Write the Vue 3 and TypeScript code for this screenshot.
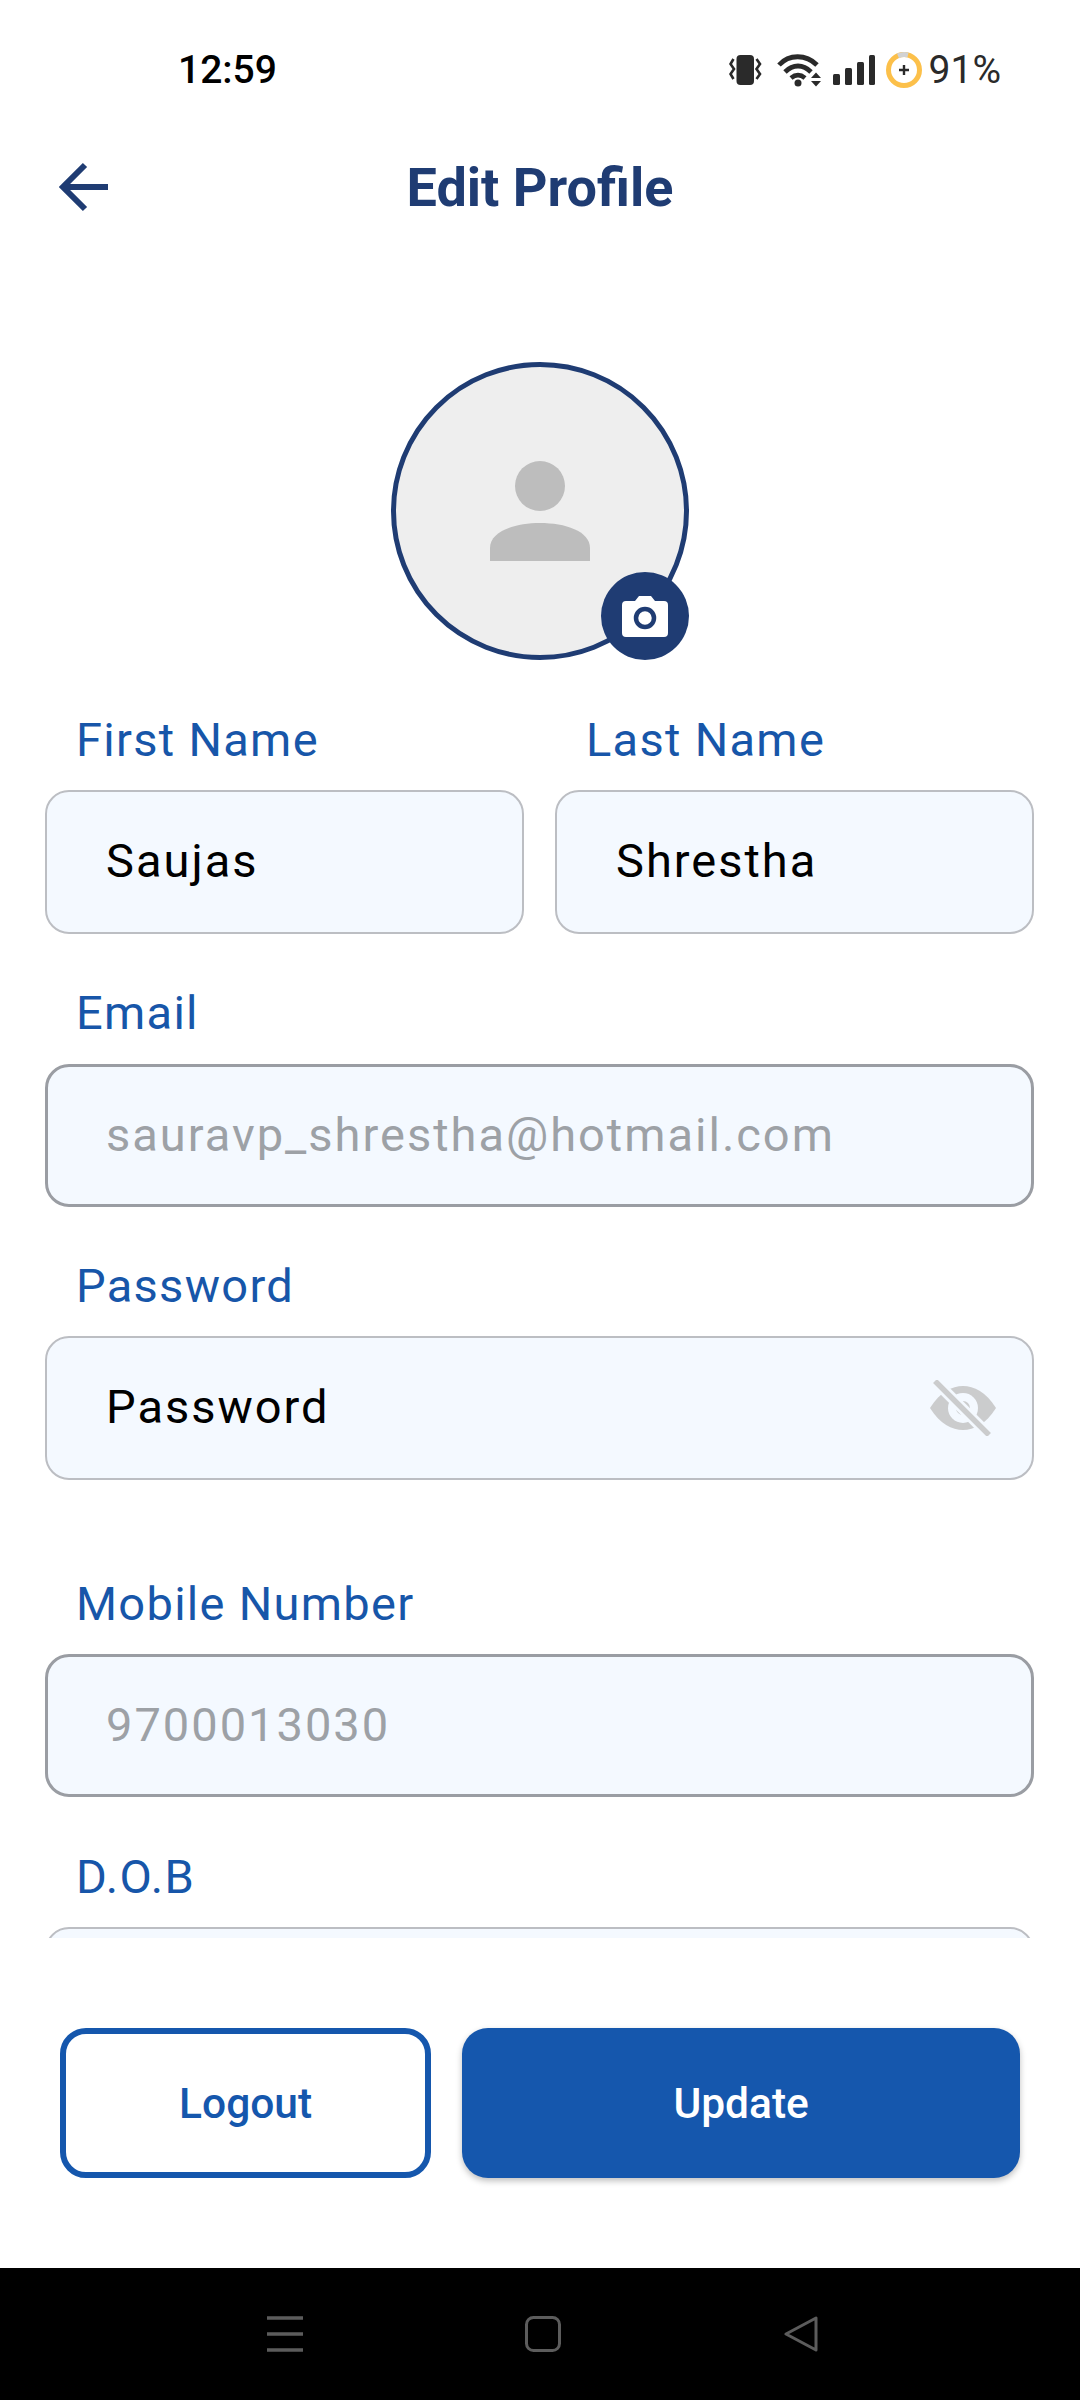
<script setup lang="ts">
interface Field { label: string; value: string; locked?: boolean; eye?: boolean; cls: string }
const fields: Field[] = [
  { label: 'Email', value: 'sauravp_shrestha@hotmail.com', locked: true, cls: 'after-name' },
  { label: 'Password', value: 'Password', eye: true, cls: 'after-email' },
  { label: 'Mobile Number', value: '9700013030', locked: true, cls: 'after-password' },
  { label: 'D.O.B', value: '', cls: 'after-mobile' },
]
</script>

<template>
  <div class="screen">
    <div class="status">
      <span class="time">12:59</span>
      <div class="status-right">
        <svg class="ic-vib" width="34" height="32" viewBox="0 0 34 32">
          <rect x="7.500" y="1" width="17.500" height="30" rx="4" fill="#2a2a2a" />
          <path d="M4.500 5 L1.500 10 L5 15 L1.500 20 L4.500 25 M27.500 5 L31 10 L27.500 15 L31 20 L27.500 25" fill="none" stroke="#2a2a2a" stroke-width="2.600" />
        </svg>
        <svg class="ic-wifi" width="45" height="34" viewBox="0 0 45 34">
          <path d="M3 12 C13 1 30 1 41 12 M9 19 C17 11 27 11 35 19 M15 25 C20 21 24 21 29 25" fill="none" stroke="#2a2a2a" stroke-width="4.800" />
          <circle cx="22" cy="30" r="3.500" fill="#2a2a2a" />
          <path d="M35 25 L40 19.500 L45 25 Z M35 28 L45 28 L40 33.500 Z" fill="#2a2a2a" />
        </svg>
        <svg class="ic-signal" width="42" height="30" viewBox="0 0 42 30">
          <rect x="0" y="19" width="7" height="11" rx="1.500" fill="#2a2a2a" />
          <rect x="12" y="13" width="7" height="17" rx="1.500" fill="#2a2a2a" />
          <rect x="24" y="7" width="7" height="23" rx="1.500" fill="#2a2a2a" />
          <rect x="36" y="0" width="6" height="30" rx="1.500" fill="#2a2a2a" />
        </svg>
        <svg class="ic-batt" width="36" height="36" viewBox="0 0 36 36">
          <circle cx="18" cy="18" r="15.500" fill="none" stroke="#fcc04a" stroke-width="5" />
          <path d="M12 3.900 A15.500 15.500 0 0 1 22 3" fill="none" stroke="#d2d2d2" stroke-width="5" />
          <path d="M13 18 H23 M18 13 V23" stroke="#2a2a2a" stroke-width="2.400" />
        </svg>
        <span class="batt-text">91%</span>
      </div>
    </div>

    <header class="header">
      <svg class="back" width="50" height="50" viewBox="0 0 50 50">
        <path d="M26 3 L4 25 L26 47 M4 25 H49" fill="none" stroke="#1f3c73" stroke-width="6" />
      </svg>
      <h1 class="title">Edit Profile</h1>
    </header>

    <main class="content">
      <div class="avatar-wrap">
        <div class="avatar">
          <svg width="100" height="100" viewBox="0 0 100 100">
            <circle cx="50" cy="25" r="25" fill="#bdbdbd" />
            <path d="M0 100 V87 C0 70 25 62 50 62 C75 62 100 70 100 87 V100 Z" fill="#bdbdbd" />
          </svg>
        </div>
        <div class="badge">
          <svg width="46" height="42" viewBox="0 0 46 42">
            <path d="M4 6 H13 L17 1 H29 L33 6 H42 Q46 6 46 10 V38 Q46 42 42 42 H4 Q0 42 0 38 V10 Q0 6 4 6 Z" fill="#fff" />
            <circle cx="23" cy="23" r="9" fill="none" stroke="#1f3c73" stroke-width="4.500" />
          </svg>
        </div>
      </div>

      <div class="name-row">
        <div class="group">
          <label class="label">First Name</label>
          <div class="field"><span class="value">Saujas</span></div>
        </div>
        <div class="group">
          <label class="label">Last Name</label>
          <div class="field"><span class="value">Shrestha</span></div>
        </div>
      </div>

      <div v-for="f in fields" :key="f.label" class="group" :class="f.cls">
        <label class="label">{{ f.label }}</label>
        <div class="field" :class="{ locked: f.locked }">
          <span class="value">{{ f.value }}</span>
          <svg v-if="f.eye" class="eye" width="66" height="56" viewBox="0 0 66 56">
            <path d="M0 28 C10 12 22 6 33 6 C44 6 56 12 66 28 C56 44 44 50 33 50 C22 50 10 44 0 28 Z" fill="#cbcccd" />
            <circle cx="33" cy="28" r="15" fill="#f4f9ff" />
            <circle cx="33" cy="28" r="7" fill="#cbcccd" />
            <path d="M5 1 L59 55" stroke="#f4f9ff" stroke-width="11" />
            <path d="M5 1 L59 55" stroke="#cbcccd" stroke-width="5.500" />
          </svg>
        </div>
      </div>
    </main>

    <footer class="footer">
      <button class="btn outline">Logout</button>
      <button class="btn solid">Update</button>
    </footer>

    <nav class="navbar">
      <svg width="36" height="36" viewBox="0 0 36 36">
        <path d="M0 2 H36 M0 18 H36 M0 34 H36" stroke="#5c5c5c" stroke-width="3.500" />
      </svg>
      <svg width="36" height="36" viewBox="0 0 36 36">
        <rect x="1.500" y="1.500" width="33" height="33" rx="7" fill="none" stroke="#5c5c5c" stroke-width="3" />
      </svg>
      <svg width="36" height="36" viewBox="0 0 36 36">
        <path d="M33 2 V34 L3 18 Z" fill="none" stroke="#5c5c5c" stroke-width="3" stroke-linejoin="round" />
      </svg>
    </nav>
  </div>
</template>

<style scoped>
.screen {
  width: 1080px;
  height: 2400px;
  display: flex;
  flex-direction: column;
  background: #fff;
  font-family: Roboto, "Liberation Sans", sans-serif;
  overflow: hidden;
}
.status {
  height: 140px;
  flex: none;
  display: flex;
  align-items: center;
  justify-content: space-between;
  padding: 0 79px 0 178px;
  box-sizing: border-box;
}
.time {
  font-size: 39px;
  font-weight: 500;
  color: #000;
}
.status-right {
  display: flex;
  align-items: center;
}
.status-right svg { display: block; }
.ic-vib { margin-right: 13px; }
.ic-wifi { margin-right: 12px; }
.ic-signal { margin-right: 11px; }
.ic-batt { margin-right: 7px; }
.batt-text {
  font-size: 39px;
  color: #2a2a2a;
}
.header {
  position: relative;
  height: 94px;
  flex: none;
  display: flex;
  align-items: center;
  justify-content: center;
}
.back {
  position: absolute;
  left: 59px;
  top: 22px;
}
.title {
  margin: 0;
  font-size: 54px;
  font-weight: 700;
  color: #1f3c73;
}
.content {
  flex: 1;
  min-height: 0;
  overflow: hidden;
  padding: 128px 46px 0 45px;
}
.avatar-wrap {
  position: relative;
  width: 298px;
  height: 298px;
  margin: 0 auto 52px;
}
.avatar {
  width: 100%;
  height: 100%;
  box-sizing: border-box;
  border: 5px solid #1f3c73;
  border-radius: 50%;
  background: #eeeeee;
  display: flex;
  align-items: center;
  justify-content: center;
}
.badge {
  position: absolute;
  right: 0;
  bottom: 0;
  width: 88px;
  height: 88px;
  border-radius: 50%;
  background: #1f3c73;
  display: flex;
  align-items: center;
  justify-content: center;
}
.name-row {
  display: grid;
  grid-template-columns: 479px 479px;
  column-gap: 31px;
}
.after-name { margin-top: 52px; }
.after-email { margin-top: 51px; }
.after-password { margin-top: 96px; }
.after-mobile { margin-top: 52px; }
.label {
  display: block;
  height: 54px;
  line-height: 54px;
  margin: 0 0 24px 31px;
  font-size: 47px;
  letter-spacing: 1.300px;
  color: #1756a9;
  position: relative;
  top: 1px;
}
.after-name .label { top: 0; }
.field {
  position: relative;
  height: 144px;
  box-sizing: border-box;
  border: 2px solid #bcbec3;
  border-radius: 24px;
  background: #f4f9ff;
  display: flex;
  align-items: center;
  padding: 0 0 3px 59px;
}
.field.locked {
  height: 143px;
  border: 3px solid #9a9da3;
  padding-left: 58px;
}
.value {
  font-size: 47px;
  letter-spacing: 2px;
  color: #000;
}
.locked .value { color: #9da1a6; }
.eye {
  position: absolute;
  right: 36px;
  top: 42px;
}
.footer {
  height: 330px;
  flex: none;
  box-sizing: border-box;
  display: flex;
  gap: 31px;
  padding: 90px 60px 0 60px;
  background: #fff;
}
.btn {
  height: 150px;
  border-radius: 26px;
  font-family: inherit;
  font-size: 42.500px;
  font-weight: 500;
  box-sizing: border-box;
}
.outline {
  width: 372px;
  background: #fff;
  border: 6px solid #1557ad;
  color: #1557ad;
}
.solid {
  width: 559px;
  border: none;
  background: #1557ad;
  color: #fff;
  box-shadow: 0 3px 6px rgba(0, 0, 0, 0.25);
}
.navbar {
  height: 132px;
  flex: none;
  box-sizing: border-box;
  background: #000;
  display: flex;
  align-items: flex-start;
  padding: 48px 0 0 267px;
  gap: 222px;
}
.navbar svg { display: block; }
</style>
